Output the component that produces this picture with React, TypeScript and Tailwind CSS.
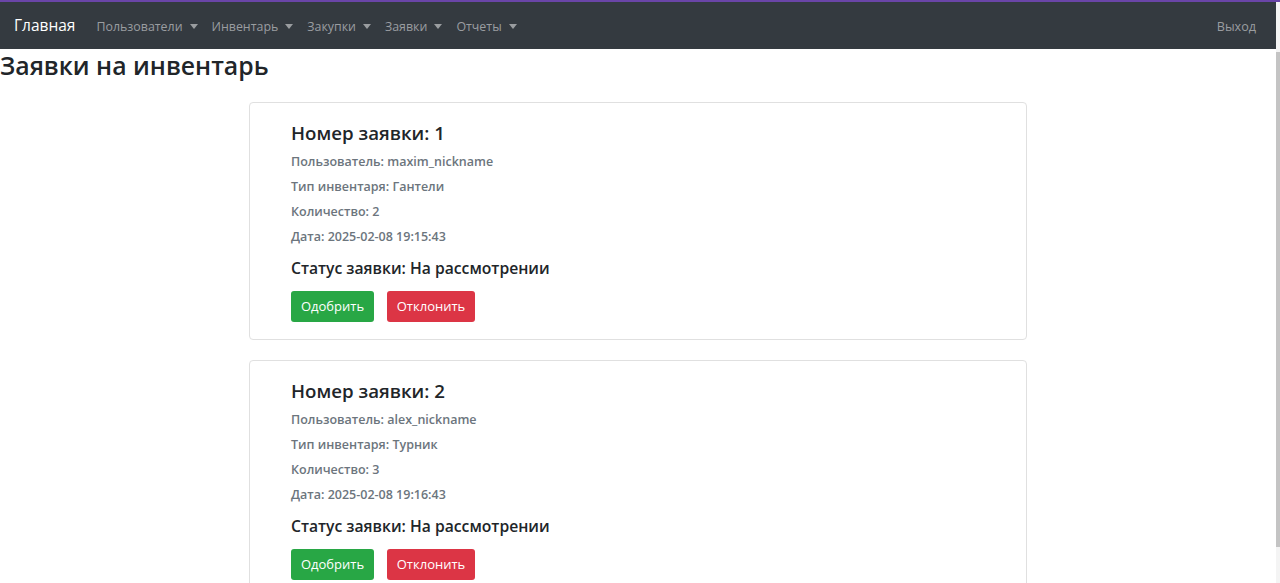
type Request = {
  id: number;
  user: string;
  kind: string;
  qty: number;
  date: string;
  status: string;
};

const requests: Request[] = [
  { id: 1, user: 'maxim_nickname', kind: 'Гантели', qty: 2, date: '2025-02-08 19:15:43', status: 'На рассмотрении' },
  { id: 2, user: 'alex_nickname', kind: 'Турник', qty: 3, date: '2025-02-08 19:16:43', status: 'На рассмотрении' },
];

const menu = ['Пользователи', 'Инвентарь', 'Закупки', 'Заявки', 'Отчеты'];

function Caret() {
  return (
    <span className="ml-[7px] inline-block h-0 w-0 border-x-[4px] border-t-[5px] border-x-transparent border-t-[#9a9da0] align-middle" />
  );
}

function Navbar() {
  return (
    <nav className="flex h-[47px] items-center bg-[#343a40] pl-[14px] pr-[20px]">
      <a className="mr-[21px] mt-[1px] text-[15.5px] text-white">Главная</a>
      <ul className="mt-[3px] flex items-center gap-[14px]">
        {menu.map((item) => (
          <li key={item} className="flex items-center text-[12.4px] text-[#9a9da0]">
            {item}
            <Caret />
          </li>
        ))}
      </ul>
      <a className="ml-auto mt-[3px] text-[12.6px] text-[#9a9da0]">Выход</a>
    </nav>
  );
}

function RequestCard({ req }: { req: Request }) {
  return (
    <div className="mb-[20px] h-[238px] w-[778px] rounded-[4px] border border-[#e0e0e0] bg-white pl-[41px] pt-[18px]">
      <h4 className="h-[24px] text-[18.7px] font-semibold leading-[24px] text-[#212529]">
        Номер заявки: {req.id}
      </h4>
      <div className="mt-[4px] text-[12.5px] font-semibold text-[#6c757d]">
        <p className="h-[25px] leading-[25px]">Пользователь: {req.user}</p>
        <p className="h-[25px] leading-[25px]">Тип инвентаря: {req.kind}</p>
        <p className="h-[25px] leading-[25px]">Количество: {req.qty}</p>
        <p className="h-[25px] leading-[25px]">Дата: {req.date}</p>
      </div>
      <h5 className="mt-[7px] h-[24px] text-[15.7px] font-semibold leading-[24px] text-[#212529]">
        Статус заявки: {req.status}
      </h5>
      <div className="mt-[11px] flex gap-[13px]">
        <button className="h-[31px] w-[83px] rounded-[3px] bg-[#28a745] text-[13px] text-white">Одобрить</button>
        <button className="h-[31px] w-[88px] rounded-[3px] bg-[#dc3545] text-[13px] text-white">Отклонить</button>
      </div>
    </div>
  );
}

export default function App() {
  return (
    <div className="flex h-[583px] w-[1280px] flex-col overflow-hidden bg-white font-['Open_Sans',sans-serif]">
      <div className="h-[2px] bg-[#6a45a8]" />
      <div className="flex min-h-0 flex-1">
        <div className="flex-1">
          <Navbar />
          <h2 className="mt-[1px] h-[31px] text-[24.8px] font-semibold leading-[31px] text-[#212529]">
            Заявки на инвентарь
          </h2>
          <div className="mt-[21px] flex flex-col items-center">
            {requests.map((r) => (
              <RequestCard key={r.id} req={r} />
            ))}
          </div>
        </div>
        <div className="flex w-[4px] flex-col bg-[#f4f4f4]">
          <div className="mt-[50px] h-[495px] bg-[#c4c4c4]" />
        </div>
      </div>
    </div>
  );
}
